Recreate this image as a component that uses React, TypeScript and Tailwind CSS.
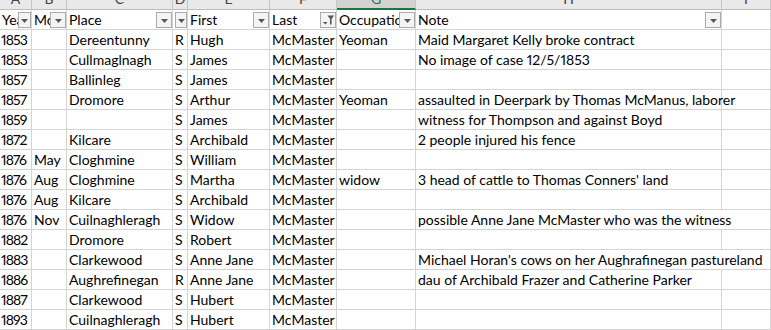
import React from "react";

const W = [
  "w-[32px]",
  "w-[35px]",
  "w-[106px]",
  "w-[15px]",
  "w-[82px]",
  "w-[67px]",
  "w-[79px]",
  "w-[306px]",
  "flex-1",
];

const LETTERS = ["A", "B", "C", "D", "E", "F", "G", "H", "I"];

type Row = [string, string, string, string, string, string, string, string];

const ROWS: Row[] = [
  ["1853", "", "Dereentunny", "R", "Hugh", "McMaster", "Yeoman", "Maid Margaret Kelly broke contract"],
  ["1853", "", "Cullmaglnagh", "S", "James", "McMaster", "", "No image of case 12/5/1853"],
  ["1857", "", "Ballinleg", "S", "James", "McMaster", "", ""],
  ["1857", "", "Dromore", "S", "Arthur", "McMaster", "Yeoman", "assaulted in Deerpark by Thomas McManus, laborer"],
  ["1859", "", "", "S", "James", "McMaster", "", "witness for Thompson and against Boyd"],
  ["1872", "", "Kilcare", "S", "Archibald", "McMaster", "", "2 people injured his fence"],
  ["1876", "May", "Cloghmine", "S", "William", "McMaster", "", ""],
  ["1876", "Aug", "Cloghmine", "S", "Martha", "McMaster", "widow", "3 head of cattle to Thomas Conners' land"],
  ["1876", "Aug", "Kilcare", "S", "Archibald", "McMaster", "", ""],
  ["1876", "Nov", "Cuilnaghleragh", "S", "Widow", "McMaster", "", "possible Anne Jane McMaster who was the witness"],
  ["1882", "", "Dromore", "S", "Robert", "McMaster", "", ""],
  ["1883", "", "Clarkewood", "S", "Anne Jane", "McMaster", "", "Michael Horan's cows on her Aughrafinegan pastureland"],
  ["1886", "", "Aughrefinegan", "R", "Anne Jane", "McMaster", "", "dau of Archibald Frazer and Catherine Parker"],
  ["1887", "", "Clarkewood", "S", "Hubert", "McMaster", "", ""],
  ["1893", "", "Cuilnaghleragh", "S", "Hubert", "McMaster", "", ""],
];

const SPILL = [9, 11];

function DropButton({ w, filtered }: { w: string; filtered?: boolean }) {
  return (
    <div
      className={`absolute right-0 top-[2px] h-[16px] ${w} border border-[#ababab] bg-[#f4f4f4] flex items-center justify-center`}
    >
      {filtered ? (
        <svg width="14" height="14" viewBox="0 0 14 14">
          <path d="M2 9H6.5L4.25 11.5Z" fill="#595959" />
          <path d="M6.5 2.5H13L10.6 6V11.5H9V6Z" fill="#595959" />
        </svg>
      ) : (
        <svg width="7" height="4" viewBox="0 0 7 4" className="mt-[1px]">
          <path d="M0 0H7L3.5 4Z" fill="#595959" />
        </svg>
      )}
    </div>
  );
}

const HEAD = ["Year", "Month", "Place", "", "First", "Last", "Occupation", "Note", ""];

export default function App() {
  return (
    <div
      className="w-[771px] h-[330px] overflow-hidden bg-white text-black text-[14px] proportional-nums"
      style={{ fontFamily: "Lato, 'Liberation Sans', sans-serif" }}
    >
      {/* column letters */}
      <div className="flex h-[10px]">
        {LETTERS.map((l, i) => (
          <div
            key={l}
            className={`${W[i]} shrink-0 flex justify-center items-start overflow-hidden border-r border-[#c6c6c6] ${
              i === 6
                ? "bg-[#d2d2d2] border-b-2 border-b-[#217346] text-[#217346]"
                : "bg-[#e9e9e9] border-b border-b-[#bdbdbd] text-[#444444]"
            }`}
          >
            <span className="leading-[14px] mt-[-8px]">{l}</span>
          </div>
        ))}
      </div>
      {/* filter header row */}
      <div className="flex h-[20px]">
        {HEAD.map((h, i) => (
          <div
            key={i}
            className={`${W[i]} shrink-0 relative border-r border-b border-[#d4d4d4] pl-[2px] whitespace-nowrap overflow-hidden flex items-end`}
          >
            <span className="leading-[18px]">{h}</span>
            {i === 0 && <DropButton w="w-[13px]" />}
            {i === 1 && <DropButton w="w-[16px]" />}
            {i === 2 && <DropButton w="w-[16px]" />}
            {i === 3 && <DropButton w="w-[12px]" />}
            {i === 4 && <DropButton w="w-[16px]" />}
            {i === 5 && <DropButton w="w-[16px]" filtered />}
            {i === 6 && <DropButton w="w-[16px]" />}
            {i === 7 && <DropButton w="w-[16px]" />}
          </div>
        ))}
      </div>
      {/* data rows */}
      {ROWS.map((r, ri) => {
        const spill = SPILL.includes(ri);
        return (
          <div key={ri} className="flex h-[20px]">
            {[...r, ""].map((c, i) => (
              <div
                key={i}
                className={`${W[i]} shrink-0 border-b border-[#d4d4d4] whitespace-nowrap flex items-end ${
                  i === 0 ? "pl-[1px] tracking-[-0.9px]" : "pl-[2px]"
                } ${
                  i === 7 && spill
                    ? "border-r border-r-transparent overflow-visible relative z-10"
                    : i === 7
                    ? "border-r overflow-visible"
                    : "border-r overflow-hidden"
                }`}
              >
                <span className="leading-[18px]">{c}</span>
              </div>
            ))}
          </div>
        );
      })}
    </div>
  );
}
